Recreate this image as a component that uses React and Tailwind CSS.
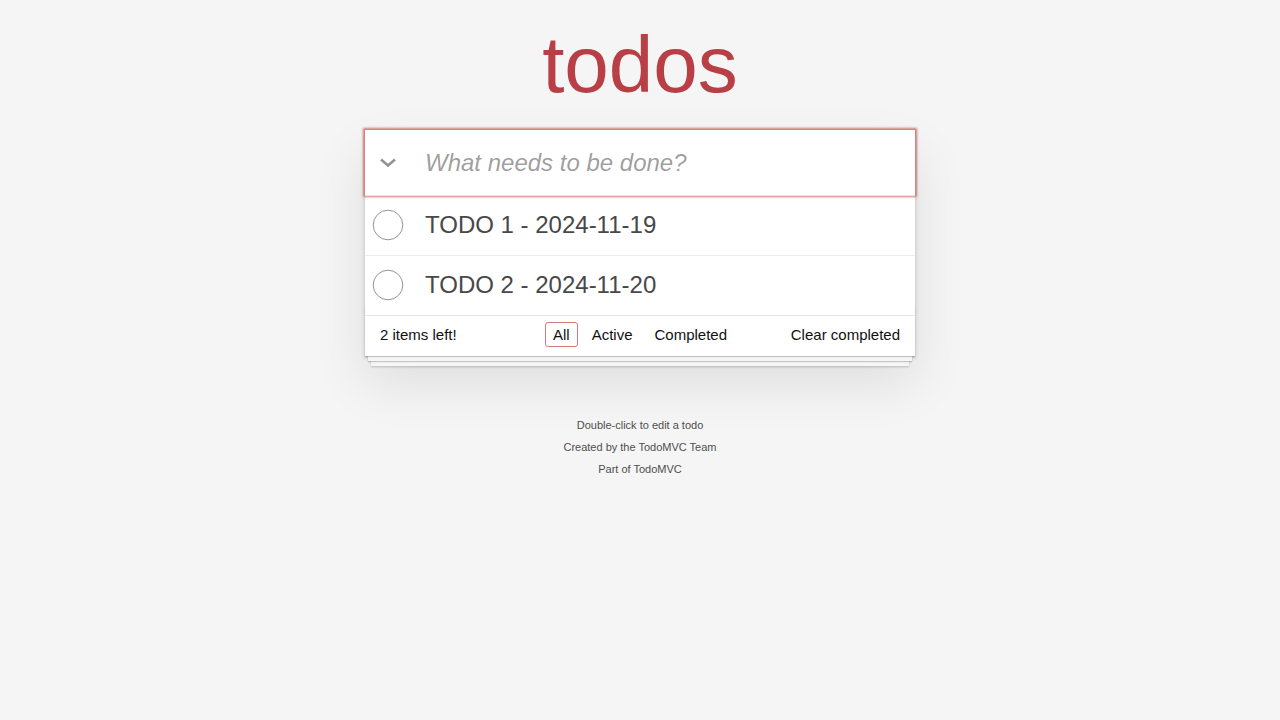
import React from 'react';

const todos = [
  { id: 1, title: 'TODO 1 - 2024-11-19' },
  { id: 2, title: 'TODO 2 - 2024-11-20' },
];

const filters = ['All', 'Active', 'Completed'];

/* ─── little drawings ─────────────────────────────── */
function Chevron() {
  return (
    <svg width="18" height="10" viewBox="0 0 18 10" fill="none">
      <path d="M2 1.5 L9 7.5 L16 1.5" stroke="#949494" strokeWidth="2.6" />
    </svg>
  );
}

function Circle() {
  return (
    <svg width="32" height="32" viewBox="0 0 32 32" fill="none">
      <circle cx="16" cy="16" r="14.8" stroke="#949494" strokeWidth="1" />
    </svg>
  );
}

function TodoItem({ todo, last }) {
  return (
    <li className={`flex items-center h-[58.8px] text-[24px] ${last ? '' : 'border-b border-[#ededed] box-content'}`}>
      <div className="w-[45px] flex justify-center">
        <Circle />
      </div>
      <label className="pl-[15px] leading-[1.2] text-[#484848]">{todo.title}</label>
    </li>
  );
}

export default function App() {
  return (
    <div className="min-h-screen bg-[#f5f5f5] text-[#111111] text-[14px] leading-[1.4em] font-['Liberation_Sans',Arial,sans-serif]">
      <div className="w-[550px] mx-auto">
        {/* title */}
        <div className="h-[130px] pt-[25px]">
          <h1 className="text-center text-[80px] leading-[80px] text-[#b83f45] font-extralight">todos</h1>
        </div>

        {/* app card */}
        <section className="bg-white shadow-[0_2px_4px_0_rgba(0,0,0,0.2),0_25px_50px_0_rgba(0,0,0,0.1)]">
          <header className="flex items-center h-[65px] shadow-[0_0_2px_2px_#cf7d7d]">
            <div className="w-[45px] flex justify-center">
              <Chevron />
            </div>
            <input
              className="flex-1 h-full pl-[15px] pr-[16px] text-[24px] leading-[1.4em] bg-transparent outline-none placeholder:italic placeholder:text-black/40"
              placeholder="What needs to be done?"
            />
          </header>

          <ul className="border-t border-[#e6e6e6]">
            {todos.map((t, i) => (
              <TodoItem key={t.id} todo={t} last={i === todos.length - 1} />
            ))}
          </ul>

          {/* footer with stacked sheets */}
          <footer className="relative border-t border-[#e6e6e6] px-[15px] pt-[9px] pb-[11px] h-[41px] grid grid-cols-[1fr_auto_1fr] grid-rows-[20px] items-center text-[15px] before:content-[''] before:absolute before:inset-x-0 before:bottom-0 before:h-[50px] before:overflow-hidden before:pointer-events-none before:shadow-[0_1px_1px_rgba(0,0,0,0.2),0_8px_0_-3px_#f6f6f6,0_9px_1px_-3px_rgba(0,0,0,0.2),0_16px_0_-6px_#f6f6f6,0_17px_2px_-6px_rgba(0,0,0,0.2)]">
            <span className="relative leading-[20px]">2 items left!</span>
            <ul className="relative flex">
              {filters.map((f) => (
                <li key={f}>
                  <a
                    className={`block m-[3px] px-[7px] py-[3px] leading-[17px] rounded-[3px] border ${f === 'All' ? 'border-[#d97a7a]' : 'border-transparent'}`}
                  >
                    {f}
                  </a>
                </li>
              ))}
            </ul>
            <button className="relative justify-self-end leading-[19px] text-[15px]">Clear completed</button>
          </footer>
        </section>

        {/* info */}
        <div className="mt-[64px] flex flex-col gap-[11px] text-center text-[11px] leading-none text-[#4d4d4d] [text-shadow:0_1px_0_rgba(255,255,255,0.5)]">
          <p>Double-click to edit a todo</p>
          <p>Created by the TodoMVC Team</p>
          <p>
            Part of <a>TodoMVC</a>
          </p>
        </div>
      </div>
    </div>
  );
}
